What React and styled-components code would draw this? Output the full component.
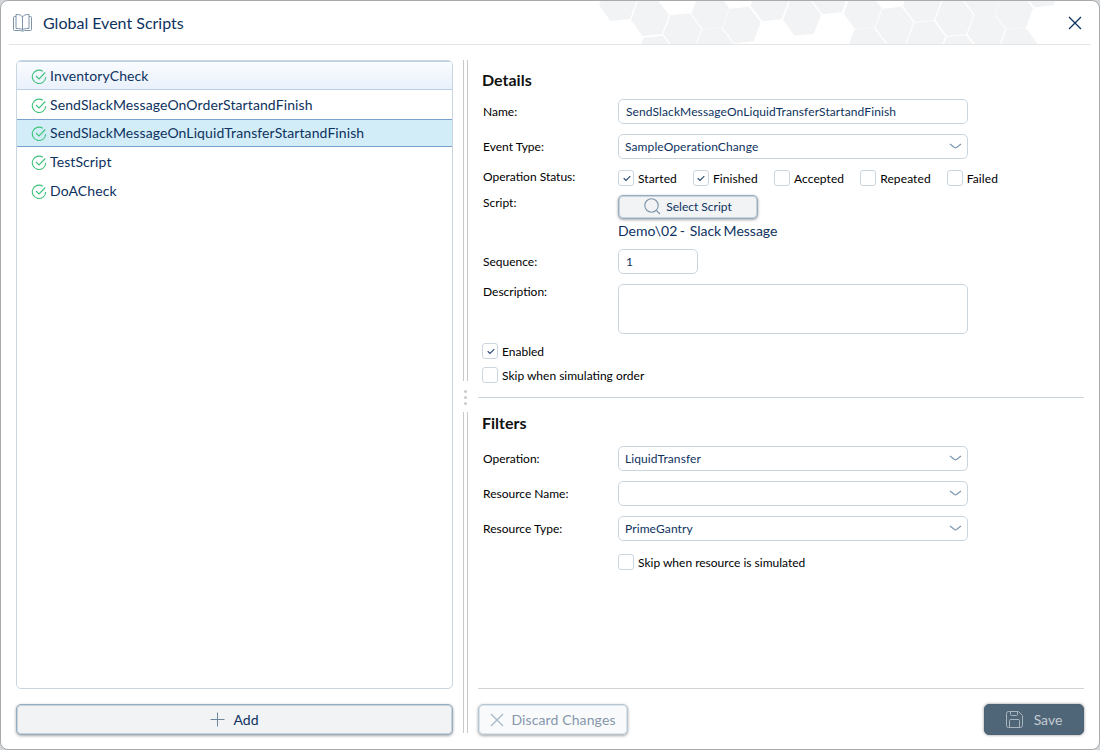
import React, { useState } from 'react';
import styled, { createGlobalStyle, css } from 'styled-components';

const GlobalStyle = createGlobalStyle`
  * {
    box-sizing: border-box;
  }
  body {
    margin: 0;
    background: #d3d6d9;
    font-family: Lato, 'Open Sans', sans-serif;
    overflow: hidden;
  }
  button, input, textarea {
    font-family: inherit;
  }
`;

const navy = '#0d3260';
const line = '#c9d6e0';

const Dialog = styled.div`
  display: flex;
  flex-direction: column;
  width: 1100px;
  height: 750px;
  background: #fff;
  border: 1px solid #a8aaac;
  border-radius: 8px;
  overflow: hidden;
`;

const Header = styled.header`
  display: flex;
  align-items: center;
  height: 44px;
  margin: 0 8px;
  padding: 0 9px 0 4px;
  border-bottom: 1px solid #e3e4e5;
  color: ${navy};
`;

const Title = styled.h1`
  margin: 0 0 0 11px;
  font-size: 16px;
  font-weight: 400;
  line-height: 20px;
  white-space: nowrap;
`;

const Pattern = styled.svg`
  display: block;
  width: 520px;
  height: 43px;
  margin-left: auto;
  margin-right: -32px;
  fill: #f2f3f5;
`;

const CloseButton = styled.button`
  display: flex;
  padding: 0;
  border: none;
  background: none;
  color: ${navy};
  cursor: pointer;
`;

const Body = styled.main`
  display: flex;
  flex: 1;
  padding: 15px 15px 0;
`;

const Sidebar = styled.section`
  display: flex;
  flex-direction: column;
  width: 437px;
`;

const ScriptList = styled.ul`
  height: 629px;
  margin: 0 0 15px;
  padding: 0;
  list-style: none;
  border: 1px solid ${line};
  border-radius: 5px;
  overflow: hidden;
`;

const ScriptItem = styled.li`
  display: flex;
  align-items: center;
  gap: 3px;
  height: 29px;
  padding: 1px 0 0 14px;
  color: ${navy};
  font-size: 14px;
  letter-spacing: 0.1px;
  line-height: 18px;
  cursor: pointer;

  svg {
    margin-top: 1px;
  }

  ${({ $hovered }) => $hovered
    && css`
      border-top: 1px solid #bfd2e4;
      border-bottom: 1px solid #bad0ea;
      background: linear-gradient(#f9fbfe, #eaf1fb);
    `}

  ${({ $selected }) => $selected
    && css`
      height: 28px;
      padding-top: 0;
      border-top: 1px solid #78a2cd;
      border-bottom: 1px solid #78a2cd;
      background: #d3edf8;
    `}
`;

const Button = styled.button`
  display: flex;
  align-items: center;
  justify-content: center;
  gap: ${({ $gap }) => $gap || 8}px;
  width: ${({ $width }) => $width || '100%'};
  height: ${({ $small }) => ($small ? 24 : 31)}px;
  padding: ${({ $small }) => ($small ? '0 0 1px' : 0)};
  border: 1px solid #97adc0;
  border-radius: 5px;
  background: #f2f3f5;
  box-shadow: inset 0 0 0 1px #c6d3dd, 0 1px 3px rgba(0, 0, 0, 0.35);
  color: ${navy};
  font-size: ${({ $small }) => ($small ? 12 : 14)}px;
  cursor: pointer;

  ${({ $muted }) => $muted
    && css`
      border-color: #b6c6d3;
      background: #f9fafb;
      box-shadow: inset 0 0 0 1px #dbe4ea, 0 1px 3px rgba(0, 0, 0, 0.35);
      color: #8697ab;
      letter-spacing: 0.12px;
    `}

  ${({ $primary }) => $primary
    && css`
      border-color: #4c6377;
      background: #4f6578;
      box-shadow: 0 0 3px rgba(0, 0, 0, 0.45);
      color: #c4cbd1;
    `}

  svg {
    flex: none;
  }
`;

const Splitter = styled.div`
  display: flex;
  flex-direction: column;
  align-items: center;
  width: 5px;
  height: 674px;
  margin: 0 10px;
`;

const Rail = styled.div`
  width: 5px;
  height: 321px;
  border: solid #c8c9ca;
  border-width: 0 1px;
`;

const Grip = styled.div`
  display: flex;
  flex-direction: column;
  justify-content: center;
  gap: 3px;
  height: 31px;
  padding-top: 2px;

  i {
    width: 3px;
    height: 3px;
    border-radius: 50%;
    background: #c9cacc;
  }
`;

const Content = styled.section`
  display: flex;
  flex-direction: column;
  width: 606px;
`;

const Panel = styled.div`
  height: ${({ $height }) => $height}px;
  padding-left: 4px;
  border-bottom: 1px solid ${({ $grey }) => ($grey ? '#d2d3d4' : line)};
`;

const Heading = styled.h2`
  margin: 0;
  padding-top: ${({ $top }) => $top}px;
  color: #111;
  font-size: 16px;
  font-weight: 700;
  line-height: 20px;
`;

const Field = styled.div`
  display: flex;
  align-items: flex-start;
  margin-top: ${({ $top }) => $top}px;
`;

const Label = styled.label`
  width: 136px;
  margin-top: ${({ $drop = 5 }) => $drop}px;
  padding-left: 1px;
  color: #000;
  font-size: 12px;
  line-height: 15px;
`;

const TextInput = styled.input`
  width: ${({ $width }) => $width || 350}px;
  height: 25px;
  padding: 0 7px;
  border: 1px solid ${line};
  border-radius: 5px;
  outline: none;
  color: ${navy};
  font-size: 12px;
  letter-spacing: 0.1px;
`;

const TextArea = styled.textarea`
  width: 350px;
  height: 50px;
  border: 1px solid ${line};
  border-radius: 5px;
  outline: none;
  resize: none;
`;

const SelectBox = styled.div`
  display: flex;
  align-items: center;
  justify-content: space-between;
  width: 350px;
  height: 25px;
  padding: 0 5px 0 6px;
  border: 1px solid ${line};
  border-radius: 5px;
  color: ${navy};
  font-size: 12px;
  letter-spacing: 0.1px;
`;

const CheckRow = styled.div`
  display: flex;
  gap: 16px;
  letter-spacing: 0.1px;
`;

const CheckLabel = styled.label`
  display: flex;
  align-items: center;
  gap: 4px;
  height: 16px;
  margin-top: ${({ $top = 0 }) => $top}px;
  color: #000;
  font-size: 12px;
  line-height: 16px;
  white-space: nowrap;

  span {
    padding-top: 1px;
  }
`;

const Box = styled.button`
  display: flex;
  align-items: center;
  justify-content: center;
  width: 16px;
  height: 16px;
  padding: 1px 0 0 1px;
  border: 1px solid ${line};
  border-radius: 3px;
  background: #fff;
`;

const ScriptPath = styled.p`
  margin: 3px 0 0;
  color: ${navy};
  font-size: 14px;
  line-height: 18px;
  white-space: pre;
  word-spacing: -1.2px;
`;

const Footer = styled.footer`
  display: flex;
  justify-content: space-between;
  padding-top: 15px;
`;

const BookIcon = () => (
  <svg width="19" height="18" viewBox="0 0 19 18" fill="none" stroke="#7d93a8">
    <path d="M9.500 3C8.500 1 6.500 .5 3 .5v14c3.500 0 5.500.2 6.500 1.500 1-1.300 3-1.500 6.500-1.500V.5C12.500 .5 10.500 1 9.500 3z" />
    <path d="M9.500 3v13M3 2.500H1.500q-1 0-1 1v12q0 1 1 1H7.500l2 .8 2-.8h6q1 0 1-1v-12q0-1-1-1H16" />
  </svg>
);

const CheckCircle = () => (
  <svg width="16" height="16" viewBox="0 0 16 16" fill="none" stroke="#3fc37b" strokeWidth="1.1">
    <path d="M11.800 2.300A6.700 6.700 0 1 0 14.700 8" />
    <path d="M5 7l3 3 6.300-6.500" />
  </svg>
);

const Cross = ({ size, color }) => (
  <svg width={size} height={size} viewBox="0 0 14 14" fill="none" stroke={color} strokeWidth="1.3">
    <path d="M1 1l12 12M13 1L1 13" />
  </svg>
);

const Chevron = () => (
  <svg width="13" height="7" viewBox="0 0 13 7" fill="none" stroke="#7f98b0" strokeWidth="1.2">
    <path d="M1 1l4.500 3.500q1 .7 2 0L12 1" />
  </svg>
);

const SearchIcon = () => (
  <svg width="17" height="17" viewBox="0 0 17 17" fill="none" stroke="#7d93a8" strokeWidth="1.1">
    <circle cx="7.500" cy="7.500" r="6.700" />
    <path d="M12.300 12.300l3.700 3.700" />
  </svg>
);

const PlusIcon = () => (
  <svg width="15" height="15" viewBox="0 0 15 15" stroke="#6f879e">
    <path d="M7.500 .5v14M.5 7.500h14" />
  </svg>
);

const SaveIcon = () => (
  <svg width="17" height="17" viewBox="0 0 17 17" fill="none" stroke="#aab5be">
    <path d="M.5 2.500q0-2 2-2h10l4 4v10q0 2-2 2h-12q-2 0-2-2z" />
    <path d="M4.500 .5v3q0 1 1 1h5q1 0 1-1v-3M3.500 16.500v-7q0-1 1-1h8q1 0 1 1v7" />
  </svg>
);

const hexagons = [
  [114, 8], [210, 53], [307, 95], [391, 33], [485, 75], [569, 9], [666, 52],
  [749, -12], [848, 33], [943, 75], [1026, 11], [1123, 53], [1208, -8],
  [1302, 33], [1219, 95], [226, 162], [402, 138], [859, 138], [1039, 117],
  [1136, 160], [1315, 138], [955, 178], [1385, -33],
];

const HeaderPattern = () => (
  <Pattern viewBox="0 3 1560 129">
    {hexagons.map(([x, y]) => (
      <path key={`${x}-${y}`} d={`M${x} ${y}m57-8l-21 57-58 6-35-47 21-57 58-6z`} />
    ))}
  </Pattern>
);

function Checkbox({ label, initial = false, top }) {
  const [checked, setChecked] = useState(initial);

  return (
    <CheckLabel $top={top}>
      <Box
        type="button"
        role="checkbox"
        aria-label={label}
        aria-checked={checked}
        onClick={() => setChecked(!checked)}
      >
        {checked && (
          <svg width="8" height="7" viewBox="0 0 8 7" fill="none" stroke="#2b4c75" strokeWidth="1.2">
            <path d="M.7 3.300l2.300 2.200L7.300 1.200" />
          </svg>
        )}
      </Box>
      <span>{label}</span>
    </CheckLabel>
  );
}

function SelectField({ label, value, top }) {
  return (
    <Field $top={top}>
      <Label>{label}</Label>
      <SelectBox>
        <span>{value}</span>
        <Chevron />
      </SelectBox>
    </Field>
  );
}

const scripts = [
  'InventoryCheck',
  'SendSlackMessageOnOrderStartandFinish',
  'SendSlackMessageOnLiquidTransferStartandFinish',
  'TestScript',
  'DoACheck',
];

function App() {
  const [selected, setSelected] = useState(2);

  return (
    <>
      <GlobalStyle />
      <Dialog>
        <Header>
          <BookIcon />
          <Title>Global Event Scripts</Title>
          <HeaderPattern />
          <CloseButton aria-label="Close">
            <Cross size={14} color={navy} />
          </CloseButton>
        </Header>
        <Body>
          <Sidebar>
            <ScriptList>
              {scripts.map((name, i) => (
                <ScriptItem
                  key={name}
                  $hovered={i === 0}
                  $selected={i === selected}
                  onClick={() => setSelected(i)}
                >
                  <CheckCircle />
                  {name}
                </ScriptItem>
              ))}
            </ScriptList>
            <Button>
              <PlusIcon />
              Add
            </Button>
          </Sidebar>
          <Splitter>
            <Rail />
            <Grip>
              <i />
              <i />
              <i />
            </Grip>
            <Rail />
          </Splitter>
          <Content>
            <Panel $height={338}>
              <Heading $top={10}>Details</Heading>
              <Field $top={9}>
                <Label>Name:</Label>
                <TextInput defaultValue="SendSlackMessageOnLiquidTransferStartandFinish" />
              </Field>
              <SelectField top={10} label="Event Type:" value="SampleOperationChange" />
              <Field $top={11}>
                <Label $drop={-1}>Operation Status:</Label>
                <CheckRow>
                  <Checkbox label="Started" initial />
                  <Checkbox label="Finished" initial />
                  <Checkbox label="Accepted" />
                  <Checkbox label="Repeated" />
                  <Checkbox label="Failed" />
                </CheckRow>
              </Field>
              <Field $top={9}>
                <Label $drop={0}>Script:</Label>
                <div>
                  <Button $small $width="140px" $gap={5}>
                    <SearchIcon />
                    Select Script
                  </Button>
                  <ScriptPath>{'Demo\\02 -  Slack Message'}</ScriptPath>
                </div>
              </Field>
              <Field $top={9}>
                <Label>Sequence:</Label>
                <TextInput $width={80} defaultValue="1" />
              </Field>
              <Field $top={10}>
                <Label $drop={0}>Description:</Label>
                <TextArea />
              </Field>
              <Checkbox label="Enabled" initial top={9} />
              <Checkbox label="Skip when simulating order" top={8} />
            </Panel>
            <Panel $height={291} $grey>
              <Heading $top={15}>Filters</Heading>
              <SelectField top={13} label="Operation:" value="LiquidTransfer" />
              <SelectField top={10} label="Resource Name:" value="" />
              <SelectField top={10} label="Resource Type:" value="PrimeGantry" />
              <Field $top={13}>
                <Label />
                <Checkbox label="Skip when resource is simulated" />
              </Field>
            </Panel>
            <Footer>
              <Button $muted $width="150px" $gap={7}>
                <Cross size={14} color="#a9b9c7" />
                Discard Changes
              </Button>
              <Button $primary $width="100px" $gap={11}>
                <SaveIcon />
                Save
              </Button>
            </Footer>
          </Content>
        </Body>
      </Dialog>
    </>
  );
}

export default App;
